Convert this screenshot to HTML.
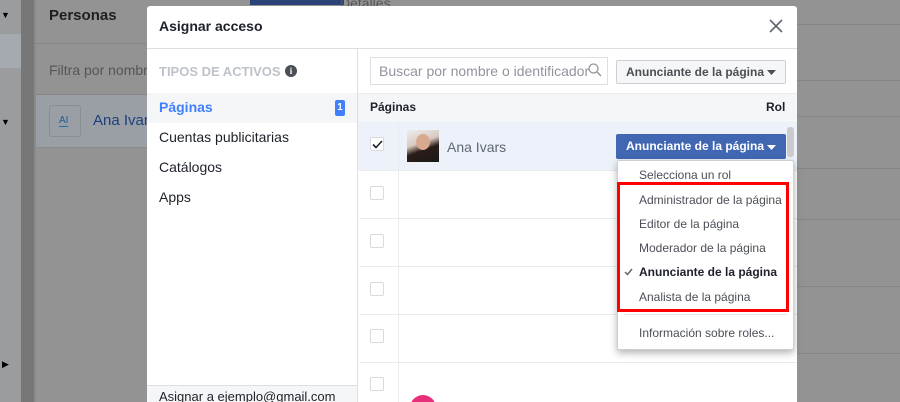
<!DOCTYPE html>
<html><head><meta charset="utf-8"><style>
*{box-sizing:border-box;margin:0;padding:0}
html{width:900px;height:402px;overflow:hidden}
body{width:900px;height:402px;overflow:hidden;position:relative;background:#939393;font-family:"Liberation Sans",Arial,sans-serif;font-size:14px;color:#1d2129}
.a{position:absolute}
.hl{position:absolute;left:797px;right:0;height:1px;background:#858585}
.cb{position:absolute;left:370px;width:14px;height:14px;border:1px solid #d8dadf;border-radius:2px;background:#fff}
.rl{position:absolute;left:359px;width:438px;height:1px;background:#e9ebee}
.mi{position:absolute;left:639px;font-size:12px;color:#4b4f56}
</style></head><body>
<div class="a" style="left:0;top:0;width:21px;height:402px;background:#9b9c9e"></div>
<div class="a" style="left:0;top:34px;width:21px;height:34px;background:#a5aab0"></div>
<div class="a" style="left:21px;top:0;width:13px;height:402px;background:#777"></div>
<div class="a" style="left:34px;top:0;width:2px;height:402px;background:#8a8a8a"></div>
<div class="a" style="left:1px;top:10px;font-size:9px;color:#000">▼</div>
<div class="a" style="left:1px;top:117px;font-size:9px;color:#000">▼</div>
<div class="a" style="left:2px;top:359px;font-size:9px;color:#000">▶</div>
<div class="a" style="left:36px;top:43px;width:111px;height:1px;background:#858585"></div>
<div class="a" style="left:36px;top:94px;width:111px;height:1px;background:#858585"></div>
<div class="a" style="left:36px;top:95px;width:111px;height:52px;background:#9a9fa6"></div>
<div class="a" style="left:36px;top:147px;width:111px;height:1px;background:#8a8a8a"></div>
<div class="a" style="left:49px;top:7px;font-weight:bold;font-size:15px;color:#1e1f22">Personas</div>
<div class="a" style="left:49px;top:62px;font-size:14px;color:#555">Filtra por nombre</div>
<div class="a" style="left:49px;top:105px;width:32px;height:32px;border:1px solid #8a8e94;border-radius:3px"></div>
<div class="a" style="left:59px;top:115px;font-size:10px;color:#1f5a8c;border-bottom:1px solid #1f6fa0">AI</div>
<div class="a" style="left:93px;top:112px;font-size:15px;color:#1c3f7a">Ana Ivars</div>
<div class="a" style="left:250px;top:0;width:94px;height:5px;background:#2b4379"></div>
<div class="a" style="left:340px;top:-5px;font-size:14px;color:#555">Detalles</div>
<div class="hl" style="top:24px"></div><div class="hl" style="top:80px"></div><div class="hl" style="top:116px"></div><div class="hl" style="top:168px"></div><div class="hl" style="top:219px"></div><div class="hl" style="top:286px"></div><div class="hl" style="top:353px"></div>

<div class="a" style="left:147px;top:6px;width:650px;height:396px;background:#fff;border-radius:3px 3px 0 0;overflow:hidden"></div>
<div class="a" style="left:159px;top:18px;font-weight:bold;font-size:14px;color:#1d2129">Asignar acceso</div>
<svg class="a" style="left:769px;top:19px" width="14" height="14"><path d="M1 1L13 13M13 1L1 13" stroke="#606770" stroke-width="1.6"/></svg>
<div class="a" style="left:147px;top:48px;width:650px;height:1px;background:#dddfe2"></div>
<div class="a" style="left:357px;top:49px;width:1px;height:353px;background:#dddfe2"></div>
<div class="a" style="left:159px;top:64px;font-weight:bold;font-size:13px;color:#bec3c9">TIPOS DE ACTIVOS</div>
<div class="a" style="left:285px;top:65px;width:12px;height:12px;border-radius:50%;background:#4b4f56;color:#fff;font-size:9px;font-weight:bold;text-align:center;line-height:12px;font-family:'Liberation Serif',serif">i</div>
<div class="a" style="left:147px;top:93px;width:210px;height:30px;background:#f5f6f7"></div>
<div class="a" style="left:159px;top:99px;font-weight:bold;font-size:14px;color:#4080ff">Páginas</div>
<div class="a" style="left:335px;top:100px;width:10px;height:16px;background:#4080ff;border-radius:2px;color:#fff;font-size:10px;font-weight:bold;text-align:center;line-height:16px">1</div>
<div class="a" style="left:159px;top:129px;color:#1d2129">Cuentas publicitarias</div>
<div class="a" style="left:159px;top:159px;color:#1d2129">Catálogos</div>
<div class="a" style="left:159px;top:189px;color:#1d2129">Apps</div>
<div class="a" style="left:147px;top:385px;width:210px;height:1px;background:#dddfe2"></div>
<div class="a" style="left:147px;top:386px;width:210px;height:16px;background:#f5f6f7;overflow:hidden"><div style="position:absolute;left:12px;top:3px;font-size:13px;color:#1d2129;white-space:nowrap">Asignar a ejemplo@gmail.com</div></div>
<div class="a" style="left:370px;top:57px;width:238px;height:28px;border:1px solid #dddfe2"></div>
<div class="a" style="left:379px;top:63px;color:#90949c;font-size:14px">Buscar por nombre o identificador</div>
<svg class="a" style="left:588px;top:63px" width="14" height="14"><circle cx="5.5" cy="5.5" r="4.5" fill="none" stroke="#90949c" stroke-width="1.3"/><path d="M9 9L13 13" stroke="#90949c" stroke-width="1.4"/></svg>
<div class="a" style="left:616px;top:60px;width:170px;height:24px;border:1px solid #ccd0d5;border-radius:2px;background:#f5f6f7"></div>
<div class="a" style="left:626px;top:65px;font-weight:bold;font-size:12px;color:#4b4f56">Anunciante de la página</div>
<svg class="a" style="left:767px;top:70px" width="9" height="5"><path d="M0 0H9L4.5 5Z" fill="#4b4f56"/></svg>
<div class="a" style="left:358px;top:93px;width:439px;height:1px;background:#e9ebee"></div>
<div class="a" style="left:358px;top:94px;width:439px;height:28px;background:#f5f6f7"></div>
<div class="a" style="left:370px;top:100px;font-weight:bold;font-size:12px;color:#1d2129">Páginas</div>
<div class="a" style="left:766px;top:100px;font-weight:bold;font-size:12px;color:#1d2129">Rol</div>
<div class="a" style="left:358px;top:122px;width:439px;height:48px;background:#edf2fa"></div>
<div class="a" style="left:398px;top:122px;width:1px;height:280px;background:#e9ebee"></div>
<div class="cb" style="top:137px"></div>
<svg class="a" style="left:372px;top:140px" width="11" height="9"><path d="M1 4.5L4 7.5L10 1" fill="none" stroke="#1d2129" stroke-width="1.6"/></svg>
<div class="a" style="left:407px;top:130px;width:32px;height:32px;background:linear-gradient(160deg,#eee 0%,#d9c9c0 40%,#2a1c18 60%,#1a1a1a 100%)"></div>
<div class="a" style="left:416px;top:134px;width:14px;height:16px;border-radius:50%;background:#d8a98f"></div>
<div class="a" style="left:447px;top:139px;color:#606770;font-size:14px">Ana Ivars</div>
<div class="a" style="left:616px;top:134px;width:170px;height:25px;background:#4267b2;border-radius:2px"></div>
<div class="a" style="left:626px;top:139px;font-weight:bold;font-size:12px;color:#fff">Anunciante de la página</div>
<svg class="a" style="left:767px;top:145px" width="9" height="5"><path d="M0 0H9L4.5 5Z" fill="#fff"/></svg>
<div class="a" style="left:787px;top:127px;width:7px;height:30px;background:#c9cbcf;border-radius:3px"></div>
<div class="rl" style="top:170px"></div>
<div class="cb" style="top:186px"></div>
<div class="rl" style="top:218px"></div>
<div class="cb" style="top:234px"></div>
<div class="rl" style="top:266px"></div>
<div class="cb" style="top:282px"></div>
<div class="rl" style="top:314px"></div>
<div class="cb" style="top:329px"></div>
<div class="rl" style="top:362px"></div>
<div class="cb" style="top:377px"></div>
<div class="a" style="left:410px;top:395px;width:26px;height:7px;overflow:hidden"><div style="width:26px;height:26px;border-radius:50%;background:#e8307a"></div></div>
<div class="a" style="left:617px;top:160px;width:177px;height:190px;background:#fff;border:1px solid #ccd0d5;border-radius:2px;box-shadow:0 3px 8px rgba(0,0,0,.3)"></div>
<div class="mi" style="top:168px">Selecciona un rol</div>
<div class="a" style="left:617px;top:182px;width:172px;height:130px;border:3px solid #f00"></div>
<div class="mi" style="top:193px">Administrador de la página</div>
<div class="mi" style="top:217px">Editor de la página</div>
<div class="mi" style="top:241px">Moderador de la página</div>
<svg class="a" style="left:624px;top:268px" width="9" height="8"><path d="M1 4L3.5 6.5L8 1" fill="none" stroke="#606770" stroke-width="1.5"/></svg>
<div class="mi" style="top:265px;font-weight:bold;color:#1d2129">Anunciante de la página</div>
<div class="mi" style="top:290px">Analista de la página</div>
<div class="a" style="left:624px;top:314px;width:163px;height:1px;background:#e5e5e5"></div>
<div class="mi" style="top:326px">Información sobre roles...</div>
</body></html>
